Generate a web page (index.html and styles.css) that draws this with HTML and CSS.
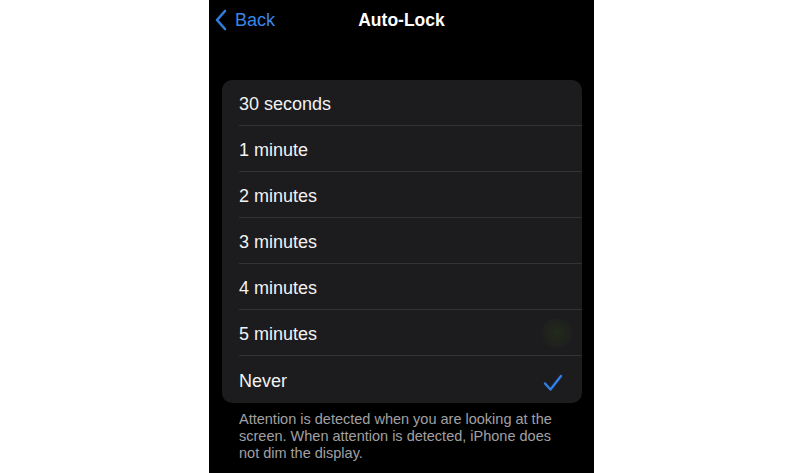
FILE: index.html
```html
<!DOCTYPE html>
<html>
<head>
<meta charset="utf-8">
<link rel="stylesheet" href="styles.css">
</head>
<body>
<div class="phone">
  <div class="nav">
    <div class="back">
      <svg class="chev" width="14" height="22" viewBox="0 0 14 22"><path d="M11 2 L3 11 L11 20" fill="none" stroke="#2f7fe0" stroke-width="2.6" stroke-linecap="round" stroke-linejoin="round"/></svg>
      <span>Back</span>
    </div>
    <div class="title">Auto-Lock</div>
  </div>
  <div class="card">
    <div class="row"><span>30 seconds</span></div>
    <div class="row"><span>1 minute</span></div>
    <div class="row"><span>2 minutes</span></div>
    <div class="row"><span>3 minutes</span></div>
    <div class="row"><span>4 minutes</span></div>
    <div class="row"><span>5 minutes</span><i class="blob"></i></div>
    <div class="row last"><span>Never</span>
      <svg class="check" width="20" height="18" viewBox="0 0 20 18"><path d="M2 9.5 L7.5 15.5 L18 2" fill="none" stroke="#2f80e8" stroke-width="2.4" stroke-linecap="round" stroke-linejoin="round"/></svg>
    </div>
  </div>
  <p class="foot">Attention is detected when you are looking at the screen. When attention is detected, iPhone does not dim the display.</p>
</div>
</body>
</html>
```
FILE: styles.css
```css
html, body { margin: 0; padding: 0; background: #fff; }
body { font-family: "Liberation Sans", Arial, sans-serif; }
.phone {
  width: 385px;
  height: 473px;
  margin-left: 209px;
  background: #000;
  overflow: hidden;
  display: flex;
  flex-direction: column;
}
.nav {
  position: relative;
  height: 40px;
  display: flex;
  align-items: center;
  justify-content: center;
}
.back {
  position: absolute;
  left: 5px;
  top: 9px;
  display: flex;
  align-items: center;
  gap: 7px;
  color: #3a86e8;
  font-size: 18px;
}
.chev { display: block; }
.title {
  color: #fff;
  font-weight: bold;
  font-size: 17.5px;
}
.card {
  margin: 40px 12px 0 13px;
  background: #1c1c1e;
  border-radius: 10px;
  padding-left: 17px;
}
.row {
  position: relative;
  height: 46px;
  padding-top: 3px;
  border-bottom: 1px solid #333336;
  box-sizing: border-box;
  display: flex;
  align-items: center;
  color: #f2f2f2;
  font-size: 18px;
}
.row.last { border-bottom: none; height: 47px; }
.check { position: absolute; right: 19px; top: 18px; }
.blob {
  position: absolute;
  right: 10px;
  top: 8px;
  width: 30px;
  height: 30px;
  border-radius: 50%;
  background: radial-gradient(circle, rgba(36,46,26,0.8) 0%, rgba(34,40,28,0.45) 55%, rgba(28,28,30,0) 100%);
}
.foot {
  margin: 8px 36px 0 30px;
  color: #a0a0a4;
  font-size: 14.5px;
  line-height: 17px;
}
```
